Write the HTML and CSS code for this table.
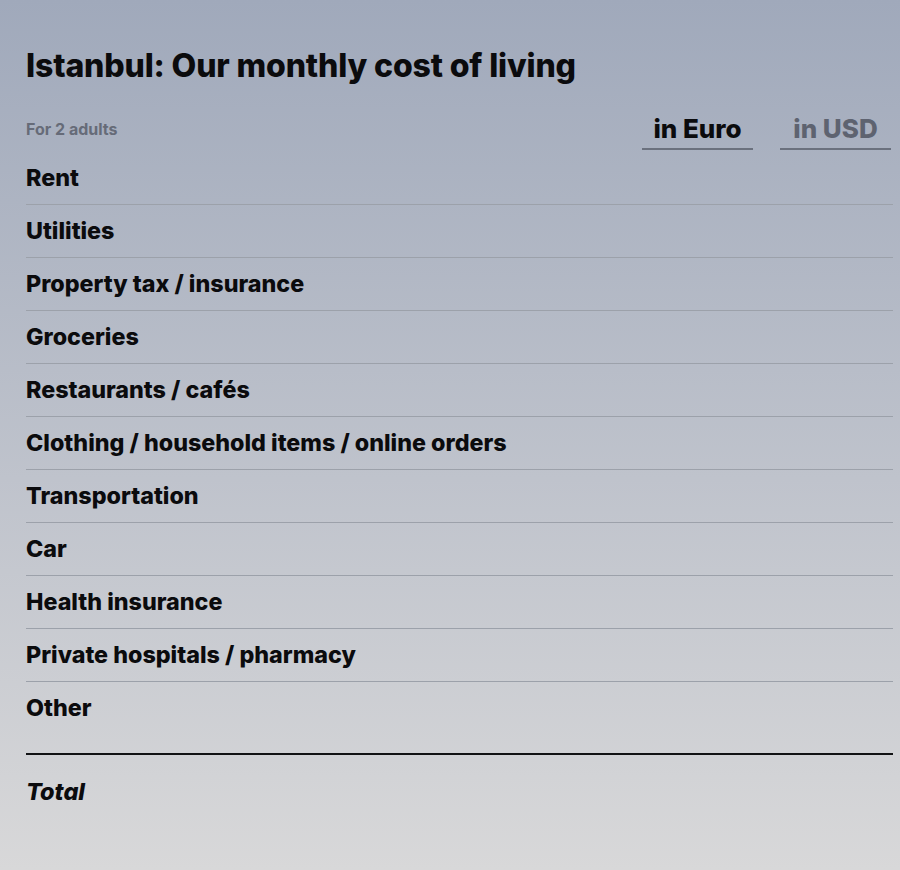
FILE: index.html
```html
<!DOCTYPE html>
<html lang="en">
<head>
<meta charset="utf-8">
<title>Istanbul: Our monthly cost of living</title>
<link rel="stylesheet" href="styles.css">
</head>
<body>
<main class="page">
  <h1 class="title">Istanbul: Our monthly cost of living</h1>
  <div class="head">
    <span class="sub">For 2 adults</span>
    <div class="tabs">
      <button class="tab active">in Euro</button>
      <button class="tab">in USD</button>
    </div>
  </div>
  <ul class="rows">
    <li class="row">Rent</li>
    <li class="row">Utilities</li>
    <li class="row">Property tax / insurance</li>
    <li class="row">Groceries</li>
    <li class="row">Restaurants / cafés</li>
    <li class="row">Clothing / household items / online orders</li>
    <li class="row">Transportation</li>
    <li class="row">Car</li>
    <li class="row">Health insurance</li>
    <li class="row">Private hospitals / pharmacy</li>
    <li class="row last">Other</li>
  </ul>
  <div class="total">Total</div>
</main>
</body>
</html>
```

FILE: styles.css
```css
html, body {
  margin: 0;
  padding: 0;
}
body {
  width: 900px;
  height: 870px;
  overflow: hidden;
  background: linear-gradient(180deg, #a0a9bb 0%, #bfc3cc 55%, #d8d8d9 100%);
  font-family: "Inter", "Liberation Sans", sans-serif;
  font-variant-ligatures: none;
  color: #0b0b0d;
}
.page {
  padding: 44px 7px 0 26px;
}
.title {
  margin: 0;
  font-size: 32px;
  font-weight: 800;
  line-height: 44px;
  letter-spacing: -0.15px;
}
.head {
  display: flex;
  justify-content: space-between;
  align-items: flex-end;
  margin-top: 24px;
}
.sub {
  font-size: 16px;
  font-weight: 700;
  color: #666b78;
  padding-bottom: 11px;
}
.tabs {
  display: flex;
  gap: 27px;
  margin-right: 2px;
}
.tab {
  width: 111px;
  background: none;
  border: none;
  border-bottom: 2px solid #6b717e;
  padding: 1px 0 3px;
  font-family: inherit;
  font-size: 26px;
  font-weight: 800;
  line-height: 32px;
  color: #5e6370;
}
.tab.active {
  color: #0b0b0d;
}
.rows {
  list-style: none;
  margin: 0;
  padding: 2px 0 0;
}
.row {
  height: 52px;
  line-height: 52px;
  font-size: 23.3px;
  font-weight: 800;
  border-bottom: 1px solid #9ca1aa;
}
.row.last {
  height: 71px;
  line-height: 52px;
  border-bottom: 2px solid #111214;
}
.total {
  font-size: 23.5px;
  font-weight: 800;
  font-style: italic;
  line-height: 74px;
}
```
